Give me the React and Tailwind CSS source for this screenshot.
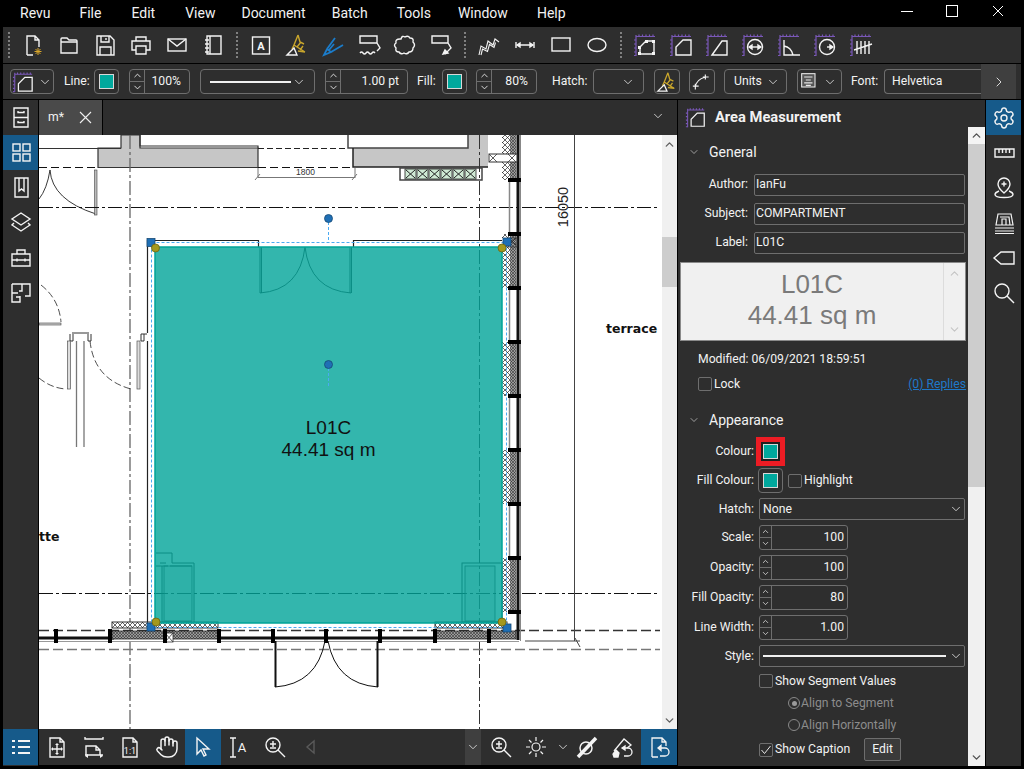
import React from "react";
import { ChevronDown, ChevronUp, ChevronRight, Settings, Hand } from "lucide-react";

const BORDER = "border border-[#6e6e6e]";

const menus = [
  ["Revu", ""],
  ["File", "ml-[29px]"],
  ["Edit", "ml-[30px]"],
  ["View", "ml-[30px]"],
  ["Document", "ml-[26px]"],
  ["Batch", "ml-[26px]"],
  ["Tools", "ml-[29px]"],
  ["Window", "ml-[27px]"],
  ["Help", "ml-[29px]"],
];

function Ic({ size = 24, color = "#f4f4f4", sw = 1.4, children, className = "" }) {
  return (
    <svg width={size} height={size} viewBox="0 0 24 24" fill="none" stroke={color} strokeWidth={sw} className={className}>
      {children}
    </svg>
  );
}

// purple ruler corner used by all the measurement tools
function Ruler() {
  return (
    <g stroke="#7a58b8" strokeWidth="1.2">
      <path d="M3 3.5h19M3 2v21" />
      <path d="M6 1.5v2M9.5 1.5v2M13 1.5v2M16.5 1.5v2M20 1.5v2M1 7h2M1 11h2M1 15h2M1 19h2M1 22.5h2" />
    </g>
  );
}

const AreaShape = <path d="M7 22v-8l7-7h8v15z" />;

function Highlighter({ size = 24 }) {
  return (
    <Ic size={size} color="#c9a62c">
      <path d="M13 2L9 12l11 7M13 2l2 7 4 2M9 12l-2 4M12 14l4-5M15 17l3-4M20 19l-7-1" />
      <path d="M2 22l7-7 3 7z" stroke="#f4f4f4" />
    </Ic>
  );
}

const toolbarOne = [
  [
    <Ic><path d="M6 22V3h8l4 4v7M14 3v4h4M6 22h6" /><path d="M17 15v7M13.5 18.5h7M14.5 16l5 5M19.5 16l-5 5" stroke="#d9a62a" strokeWidth="1" /></Ic>,
    <Ic><path d="M4 20V6q0-1 1-1h5l2 2h7q1 0 1 1v12zM4 9h16" /></Ic>,
    <Ic><path d="M4 3h13l4 4v15H4zM8 3v6h8V3M7 22v-8h11v8M13 5v2" /></Ic>,
    <Ic><path d="M7 8V4h10v4M7 17H3V8h18v9h-4M7 13h10v8H7z" /></Ic>,
    <Ic><rect x="3" y="6" width="18" height="12" /><path d="M3 6l9 7 9-7" /></Ic>,
    <Ic><path d="M6 3h14v18H6zM9 3v18M4 7h4M4 11h4M4 15h4M4 19h4" /></Ic>,
  ],
  [
    <Ic><rect x="3.500" y="4" width="17" height="17" /><text x="12" y="17" fontSize="11" fontWeight="700" textAnchor="middle" fill="#f4f4f4" stroke="none" fontFamily="Roboto">A</text></Ic>,
    <Highlighter />,
    <Ic color="#1b7cca" sw={1.8}><path d="M3 22l3-6 4 3zM6 16l8-11M10 19l12-7M8 17l5-6" /></Ic>,
    <Ic><path d="M3 3h17v7H3zM20 10l3 5-3 3" /><path d="M3 20q1.5-2 3 0t3 0 3 0 3 0 3 0" /></Ic>,
    <Ic><path d="M8 6q1-4 4-2 3-2 5 1 4 0 3 4 3 3 0 6 0 4-4 4-2 3-5 1-3 2-5-1-4 0-3-4-3-3 0-5-1-4 4-4z" /></Ic>,
    <Ic><path d="M3 3h16v7H3zM19 10l3 5-6 6" /><path d="M14 21l5-1-3-3z" fill="#f4f4f4" /></Ic>,
  ],
  [
    <Ic sw={1.1}><path d="M2 22l2-9 5 3 2-8 5 4 2-6 4 3M4 22l1.500-6 5 2.500 2-7 4.500 3 1.500-5" /></Ic>,
    <Ic><path d="M4 12h16M3 9v6M21 9v6" /><path d="M4 12l3-2v4zM20 12l-3-2v4z" fill="#f4f4f4" /></Ic>,
    <Ic><rect x="3" y="5" width="18" height="13" /></Ic>,
    <Ic><ellipse cx="12" cy="12" rx="9" ry="6.500" /></Ic>,
  ],
  [
    <Ic><Ruler /><path d="M7 21v-7l6-6h8v13z" /><g fill="#f4f4f4" stroke="none"><rect x="5" y="19" width="3" height="3" /><rect x="19" y="19" width="3" height="3" /><rect x="19" y="7" width="3" height="3" /><rect x="12" y="7" width="3" height="3" /><rect x="5" y="13" width="3" height="3" /></g></Ic>,
    <Ic><Ruler />{AreaShape}</Ic>,
    <Ic><Ruler /><path d="M7 22l10-14h5v14z" /></Ic>,
    <Ic><Ruler /><circle cx="14" cy="14" r="7.500" /><path d="M9 14h10" /><path d="M8 14l3-2v4zM20 14l-3-2v4z" fill="#f4f4f4" /></Ic>,
    <Ic><Ruler /><path d="M7 7v15h16M7 13q7 1 9 9" /></Ic>,
    <Ic><Ruler /><circle cx="14" cy="14" r="7.500" /><path d="M14 14h5" /><path d="M20 14l-3-2v4z" fill="#f4f4f4" /></Ic>,
    <Ic><Ruler /><path d="M8 8v13M12 8v13M16 8v13M20 8v13M5 17l18-6" /></Ic>,
  ],
];

const leftRail = [
  <Ic><path d="M5 3h14v19H5zM5 12.500h14M9 6v1.500h6V6M9 16v1.500h6V16" /></Ic>,
  <Ic><rect x="4" y="4" width="7" height="7" /><rect x="14" y="4" width="7" height="7" /><rect x="4" y="14" width="7" height="7" /><rect x="14" y="14" width="7" height="7" /></Ic>,
  <Ic><path d="M6 3h13v19H6zM10 3v13l2.500-2 2.500 2V3" /></Ic>,
  <Ic><path d="M12 3l9 6-9 6-9-6zM5 13l-2 2 9 6 9-6-2-2" /></Ic>,
  <Ic><path d="M3 9h18v12H3zM8 9V5h8v4M3 15h18M8 13.500v3M16 13.500v3" /></Ic>,
  <Ic><path d="M3 4h18v12h-5M13 4v7h-3M3 4v9M3 13h6M3 13v9h8v-6M7 17h4" /></Ic>,
];

const rightRail = [
  <Settings size={24} color="#f4f4f4" strokeWidth={1.4} />,
  <Ic><path d="M3 8h19v8H3zM7 8v4M10.500 8v4M14 8v4M17.500 8v4" /></Ic>,
  <Ic><path d="M12 2a6 6 0 0 1 6 6c0 4-6 9-6 9s-6-5-6-9a6 6 0 0 1 6-6zM12 5.500v5M9.500 8h5" /><path d="M7 15q-4 1.500-4 3.500 0 3 9 3t9-3q0-2-4-3.500" /></Ic>,
  <Ic sw={1.2}><path d="M6 3h13l2 11H4zM8 6h9l1 8M10 14V8h4v6M3 17h19M3 20h19M3 22.500h19" /></Ic>,
  <Ic><path d="M9 6h13v12H9l-7-6z" /></Ic>,
  <Ic><circle cx="10" cy="10" r="7" /><path d="M15 15l7 7" /></Ic>,
];

function Swatch() {
  return <div className="w-[15px] h-[15px] bg-[#00a89d] border border-[#d8d8d8]" />;
}

function Chevron({ className = "" }) {
  return <ChevronDown size={14} strokeWidth={1.4} color="#e8e8e8" className={className} />;
}

function Spinner({ width, value, h = "h-[25px]" }) {
  return (
    <div className={`${BORDER} rounded-[3px] flex ${h} shrink-0`} style={{ width }}>
      <div className="w-[12px] flex flex-col border-r border-[#6e6e6e]">
        <div className="flex-1 flex items-center justify-center border-b border-[#6e6e6e]"><ChevronUp size={9} color="#e8e8e8" /></div>
        <div className="flex-1 flex items-center justify-center"><ChevronDown size={9} color="#e8e8e8" /></div>
      </div>
      <div className="flex-1 flex items-center justify-end pr-[3px]">{value}</div>
    </div>
  );
}

function ToolSpinner({ width, value, ml }) {
  return (
    <div className={`${BORDER} rounded-[4px] flex h-[25px] shrink-0 ${ml}`} style={{ width }}>
      <div className="w-[15px] flex flex-col border-r border-[#6e6e6e]">
        <div className="flex-1 flex items-center justify-center border-b border-[#6e6e6e]"><ChevronUp size={11} color="#e8e8e8" /></div>
        <div className="flex-1 flex items-center justify-center"><ChevronDown size={11} color="#e8e8e8" /></div>
      </div>
      <div className="flex-1 flex items-center justify-end pr-[8px]">{value}</div>
    </div>
  );
}

function Check({ checked, className = "" }) {
  return (
    <div className={`w-[14px] h-[14px] ${BORDER} rounded-[2px] shrink-0 flex items-center justify-center ${className}`}>
      {checked && <svg width="12" height="12" viewBox="0 0 12 12" fill="none" stroke="#e8e8e8" strokeWidth="1"><path d="M1.500 6l3 3.500L10.500 2" /></svg>}
    </div>
  );
}

function Radio({ on }) {
  return (
    <div className="w-[12px] h-[12px] rounded-full border border-[#8a8a8a] flex items-center justify-center shrink-0">
      {on && <div className="w-[5px] h-[5px] rounded-full bg-[#9a9a9a]" />}
    </div>
  );
}

function GeneralRow({ label, value, className = "" }) {
  return (
    <div className={`flex items-center h-[22px] ${className}`}>
      <div className="w-[72px] text-right pr-[2px] pb-px">{label}</div>
      <div className={`ml-[4px] w-[211px] h-[22px] ${BORDER} rounded-[2px] flex items-center pl-[1px] pb-px`}>{value}</div>
    </div>
  );
}

function SpinRow({ label, value }) {
  return (
    <div className="flex items-center h-[25px] mt-[5px]">
      <div className="w-[76px] text-right">{label}</div>
      <div className="ml-[5px]"><Spinner width={89} value={value} /></div>
    </div>
  );
}

function Section({ title, className = "" }) {
  return (
    <div className={`flex items-center h-[20px] pl-[10px] ${className}`}>
      <ChevronDown size={12} strokeWidth={1.2} color="#e8e8e8" />
      <span className="ml-[9px] text-[14px]">{title}</span>
    </div>
  );
}

function Plan() {
  const mullionsY = [180, 234, 288, 342, 396, 450, 504, 558, 612];
  const hatchY = [[135, 180], [234, 288], [342, 396], [450, 504], [558, 612]];
  const mullionsX = [56, 110, 165, 219, 273, 326, 380, 435, 489];
  return (
    <svg viewBox="39 135 623 594" width="623" height="594" className="block bg-white" fontFamily="Liberation Sans">
      <defs>
        <pattern id="hatch" width="5" height="5" patternUnits="userSpaceOnUse">
          <rect width="5" height="5" fill="#fff" />
          <path d="M0 0l5 5M5 0L0 5" stroke="#222" strokeWidth="0.7" />
        </pattern>
        <pattern id="dark" width="3" height="3" patternUnits="userSpaceOnUse">
          <rect width="3" height="3" fill="#999" />
          <path d="M0 0l3 3M3 0L0 3" stroke="#222" strokeWidth="0.5" />
        </pattern>
      </defs>

      {/* grey core walls */}
      <path d="M121 135v13H98v19.500h160V148h-118v-13z" fill="#c6c6c6" stroke="#333" strokeWidth="1.200" />
      <path d="M140 135v11h118v2M39 148.500h82" fill="none" stroke="#333" strokeWidth="1.200" />
      <path d="M353 135v32h135v-32" fill="#c6c6c6" stroke="none" />
      <path d="M348 135v13h120v-13" fill="#fff" stroke="#444" strokeWidth="1.500" />
      <path d="M353 148v19h135" fill="none" stroke="#222" strokeWidth="1.500" />
      <rect x="400" y="168" width="82" height="12" fill="#fff" stroke="#444" strokeWidth="1.500" />
      {[406, 418, 430, 442, 454, 466].map((x) => (
        <g key={x}>
          <rect x={x - 1} y="169" width="11" height="10" fill="#cfe9d4" stroke="#222" strokeWidth="0.800" />
          <path d={`M${x} 170l9 8M${x + 9} 170l-9 8`} stroke="#222" strokeWidth="1" />
        </g>
      ))}
      <path d="M258 148.500h90" stroke="#222" strokeWidth="1" strokeDasharray="6 3" />
      <path d="M39 167.500h59M258 167.500h95" stroke="#111" strokeWidth="1" strokeDasharray="8 4" />
      <path d="M258 177.500h97M255 180l5-6M352 180l5-6M258 168v10M355 168v10" stroke="#777" strokeWidth="1" fill="none" />
      <text x="305.500" y="175" fontSize="8.500" textAnchor="middle" fill="#333">1800</text>

      {/* upper left door */}
      <path d="M39 199q8-10 11-29 2 30 46 44" fill="none" stroke="#222" strokeWidth="0.900" />
      <rect x="94.500" y="170" width="2.500" height="45" fill="#bbb" stroke="#444" strokeWidth="0.600" />

      {/* centre lines */}
      <path d="M39 207.500h621M39 593.500h621" stroke="#111" strokeWidth="1" strokeDasharray="14 3 3 3" />
      <path d="M130 135v594" stroke="#666" strokeWidth="1.300" strokeDasharray="14 3 3 3" />
      <path d="M479.500 135v594" stroke="#333" strokeWidth="1" strokeDasharray="14 3 3 3" />
      <path d="M39 630.500h621" stroke="#333" strokeWidth="1.300" strokeDasharray="10 4" />
      <path d="M39 649.500h621" stroke="#777" strokeWidth="1.300" strokeDasharray="10 4" />

      {/* left rooms */}
      <path d="M41 285q18 14 20 37M39 378q12 10 27 11M90 341q4 38 41 48" fill="none" stroke="#222" strokeWidth="0.800" strokeDasharray="7 3" />
      <rect x="39" y="323" width="22" height="2" fill="#ccc" stroke="#444" strokeWidth="0.600" />
      <path d="M72 333h17M70 334v7h3v-7M88 334v7h3v-7" fill="none" stroke="#333" strokeWidth="1" />
      <rect x="67.500" y="341" width="3" height="48" fill="#ddd" stroke="#555" strokeWidth="0.700" />
      <path d="M76.500 341v106M84 341v106" stroke="#777" strokeWidth="1.300" />
      <rect x="137" y="341" width="3" height="48" fill="#ddd" stroke="#555" strokeWidth="0.700" />
      <path d="M141 341v-7h6M141 341h3v-7" fill="none" stroke="#333" strokeWidth="1" />
      <text x="39" y="541" fontSize="12.500" fontWeight="700" fill="#111" fontFamily="DejaVu Sans">tte</text>
      <text x="606" y="333" fontSize="12.500" fontWeight="700" fill="#111" fontFamily="DejaVu Sans">terrace</text>

      {/* room shell */}
      <path d="M147.500 333V240.500h111v7M353.500 247v-6.500h150M147.500 341v282" fill="none" stroke="#222" strokeWidth="1.200" />

      {/* east wall */}
      {hatchY.map(([a, b]) => (
        <g key={a}>
          <rect x="502" y={a} width="8" height={b - a} fill="url(#hatch)" />
          <rect x="510" y={a} width="6" height={b - a} fill="url(#dark)" />
        </g>
      ))}
      <path d="M509.500 180v54M509.500 288v54M509.500 396v54M509.500 504v54" stroke="#888" strokeWidth="1.500" />
      <path d="M518 135v505" stroke="#111" strokeWidth="3" />
      <path d="M520.500 135v506" stroke="#888" strokeWidth="1" />
      {mullionsY.map((y) => <rect key={y} x="508" y={y - 2} width="13" height="4" fill="#000" />)}
      <rect x="489" y="154" width="28" height="8" fill="#fff" stroke="#333" strokeWidth="1" />
      <path d="M489 154l8 8M497 154l-8 8M508 154l8 8M516 154l-8 8" stroke="#333" strokeWidth="0.800" />
      <path d="M509 238l7 7M516 238l-7 7" stroke="#333" strokeWidth="1" />
      <rect x="508" y="238" width="9" height="9" fill="none" stroke="#333" strokeWidth="0.800" />

      {/* south wall */}
      <path d="M39 638h75M219 638h216" stroke="#111" strokeWidth="3" />
      <path d="M39 641.500h480" stroke="#999" strokeWidth="1" />
      <rect x="112" y="622" width="106" height="6" fill="url(#hatch)" stroke="#333" strokeWidth="1" />
      <rect x="112" y="631" width="106" height="8" fill="url(#dark)" stroke="#222" strokeWidth="0.800" />
      <rect x="435" y="622" width="72" height="6" fill="url(#hatch)" stroke="#333" strokeWidth="1" />
      <rect x="435" y="631" width="81" height="8" fill="url(#dark)" stroke="#222" strokeWidth="0.800" />
      <rect x="165" y="633" width="8" height="9" fill="#fff" stroke="#333" strokeWidth="0.800" />
      <path d="M165 633l8 9M173 633l-8 9" stroke="#333" strokeWidth="0.800" />
      {mullionsX.map((x) => <rect key={x} x={x - 2} y="629" width="4" height="14" fill="#000" />)}
      <path d="M275.500 641v46M377.500 641v46" stroke="#111" strokeWidth="2" />
      <path d="M275 687q42-3 50-46M378 687q-42-3-50-46" fill="none" stroke="#111" strokeWidth="1" />

      {/* dimension */}
      <path d="M574.500 135v506M525 641h55M575 638l5 9" fill="none" stroke="#444" strokeWidth="1" />
      <text transform="translate(568 207) rotate(-90)" fontSize="14.500" textAnchor="middle" fill="#222">16050</text>

      {/* room contents, tinted by the fill above them */}
      <path d="M260 247v46M261.500 247v46M350 247v46M351.500 247v46M260 293q40-3 45-46M351 293q-41-3-46-46" fill="none" stroke="#222" strokeWidth="0.900" />
      <path d="M156 553h16v10h22v59M156 566h12M160 563h6M162 566v56h30M170 566h22" fill="none" stroke="#333" strokeWidth="1" />
      <rect x="164" y="566" width="28" height="55" fill="#999" fillOpacity="0.250" stroke="#333" strokeWidth="0.800" />
      <rect x="462" y="563" width="40" height="59" fill="none" stroke="#333" strokeWidth="1" />
      <rect x="465" y="566" width="30" height="55" fill="#999" fillOpacity="0.250" stroke="#333" strokeWidth="0.800" />

      {/* area markup */}
      <rect x="155" y="247" width="347" height="376" fill="#00a498" fillOpacity="0.800" stroke="#00a498" strokeWidth="1.500" />
      <rect x="151.500" y="242.500" width="355" height="385" fill="none" stroke="#4aaaf2" strokeWidth="1" strokeDasharray="3 2" />
      <path d="M328.500 222v20M328.500 368v20" stroke="#4aaaf2" strokeWidth="1" strokeDasharray="3 2" />
      <g fill="#1f6fb5" stroke="#174a75" strokeWidth="0.800">
        <rect x="147" y="238.500" width="8" height="8" />
        <rect x="503" y="238" width="8" height="8" />
        <rect x="147" y="623" width="8" height="8" />
        <rect x="503" y="624" width="8" height="8" />
        <circle cx="328.500" cy="218.500" r="4" />
        <circle cx="328.500" cy="364.500" r="4" />
      </g>
      <g fill="#a4981d" stroke="#6d6612" strokeWidth="0.800">
        <circle cx="155.500" cy="248" r="4" />
        <circle cx="502" cy="248" r="4" />
        <circle cx="156" cy="622" r="4" />
        <circle cx="502" cy="622" r="4" />
      </g>
      <text x="328.500" y="434" fontSize="19" textAnchor="middle" fill="#111">L01C</text>
      <text x="328.500" y="456" fontSize="19" textAnchor="middle" fill="#111">44.41 sq m</text>
    </svg>
  );
}

export default function App() {
  const bottomLeft = [
    <Ic><path d="M5 22V3h10l4 4v15zM15 3v4h4M12 9v10M7 14h10" /><path d="M12 8l-2 2h4zM12 20l-2-2h4zM6 14l2-2v4zM18 14l-2-2v4z" fill="#f4f4f4" stroke="none" /></Ic>,
    <Ic><path d="M3 2v2h18V2M4 20v-9h10l4 4v5M14 11v4h4M3 20h18" /><path d="M3 21l3-2v4zM21 21l-3-2v4z" fill="#f4f4f4" stroke="none" /></Ic>,
    <Ic><path d="M5 22V3h10l4 4v15zM15 3v4h4" /><text x="12" y="19" fontSize="9" textAnchor="middle" fill="#f4f4f4" stroke="none" fontFamily="Roboto">1:1</text></Ic>,
    <Hand size={24} color="#f4f4f4" strokeWidth={1.5} />,
  ];
  return (
    <div className="w-[1024px] h-[769px] bg-black text-[#f2f2f2] text-[12.2px] [font-family:Roboto,sans-serif] overflow-hidden flex flex-col">
      {/* title bar */}
      <div className="h-[27px] flex items-center relative shrink-0">
        <div className="flex pl-[20px] text-[14px]">
          {menus.map(([name, ml]) => <span key={name} className={ml}>{name}</span>)}
        </div>
        <div className="ml-auto flex items-center pr-[20px] h-full pb-[5px]">
          <div className="w-[12px] h-px bg-white mr-[33px]" />
          <div className="w-[12px] h-[12px] border border-white mr-[34px]" />
          <svg width="12" height="12" viewBox="0 0 12 12" stroke="#fff" strokeWidth="1"><path d="M1 1l10 10M11 1L1 11" /></svg>
        </div>
      </div>

      {/* main toolbar */}
      <div className="h-[36px] mx-[3px] bg-[#2e2e2e] flex items-center shrink-0">
        {toolbarOne.map((group, g) => (
          <React.Fragment key={g}>
            <div className="w-[12px] flex justify-center shrink-0">
              <div className="h-[26px] border-l-2 border-dotted border-[#808080]" />
            </div>
            {group.map((icon, i) => (
              <div key={i} className="w-[36px] flex justify-center shrink-0">{icon}</div>
            ))}
          </React.Fragment>
        ))}
      </div>

      {/* properties toolbar */}
      <div className="h-[35px] mt-px mx-[3px] bg-[#2e2e2e] flex items-center shrink-0 pl-[7px]">
        <div className={`w-[44px] h-[25px] ${BORDER} rounded-[4px] flex items-center pl-[1px] shrink-0`}>
          <Ic size={22}><Ruler />{AreaShape}</Ic>
          <Chevron className="ml-[4px]" />
        </div>
        <span className="ml-[10px] w-[30px]">Line:</span>
        <div className={`w-[25px] h-[25px] ${BORDER} rounded-[4px] flex items-center justify-center shrink-0`}><Swatch /></div>
        <ToolSpinner width={61} value="100%" ml="ml-[10px]" />
        <div className={`ml-[10px] w-[115px] h-[25px] ${BORDER} rounded-[4px] flex items-center pl-[9px] pr-[8px] shrink-0`}>
          <div className="w-[81px] h-[2px] bg-[#f0f0f0]" />
          <Chevron className="ml-auto" />
        </div>
        <ToolSpinner width={83} value="1.00 pt" ml="ml-[10px]" />
        <span className="ml-[9px] w-[25px]">Fill:</span>
        <div className={`w-[25px] h-[25px] ${BORDER} rounded-[4px] flex items-center justify-center shrink-0`}><Swatch /></div>
        <ToolSpinner width={61} value="80%" ml="ml-[9px]" />
        <span className="ml-[15px] w-[41px]">Hatch:</span>
        <div className={`w-[51px] h-[25px] ${BORDER} rounded-[4px] flex items-center justify-end pr-[8px] shrink-0`}><Chevron /></div>
        <div className={`ml-[10px] w-[26px] h-[25px] ${BORDER} rounded-[4px] flex items-center justify-center shrink-0`}><Highlighter size={22} /></div>
        <div className={`ml-[9px] w-[26px] h-[25px] ${BORDER} rounded-[4px] flex items-center justify-center shrink-0`}>
          <Ic size={20}><path d="M4 18q1-9 12-12M1 17h7M4 14v7M13 6h7M16 3v6" /></Ic>
        </div>
        <div className={`ml-[9px] w-[63px] h-[25px] ${BORDER} rounded-[4px] flex items-center pl-[9px] pr-[6px] shrink-0`}>
          <span>Units</span><Chevron className="ml-auto" />
        </div>
        <div className={`ml-[10px] w-[45px] h-[25px] ${BORDER} rounded-[4px] flex items-center pl-[2px] pr-[4px] shrink-0`}>
          <Ic size={20} color="#e8e8e8" sw={1.3}><rect x="2" y="2" width="16" height="16" fill="#555" /><path d="M5 6h10M7 9.500h6M5 13h10M7 16h6" /></Ic>
          <Chevron className="ml-auto" />
        </div>
        <span className="ml-[9px] w-[33px]">Font:</span>
        <div className="w-[97px] h-[25px] border border-r-0 border-[#6e6e6e] rounded-l-[4px] flex items-center pl-[7px] shrink-0">Helvetica</div>
        <div className="w-[35px] h-[35px] bg-[#3f3f3f] flex items-center justify-center shrink-0"><ChevronRight size={16} strokeWidth={1.3} /></div>
      </div>

      {/* body */}
      <div className="h-[666px] mt-px mx-[3px] flex shrink-0">
        <div className="w-[35px] bg-[#2e2e2e] shrink-0 flex flex-col">
          {leftRail.map((icon, i) => (
            <div key={i} className={`h-[35px] flex items-center justify-center pb-px ${i === 1 ? "bg-[#165a8a]" : ""}`}>{icon}</div>
          ))}
          <div className="mt-auto h-[36px] mb-px bg-[#165a8a] flex items-center justify-center">
            <Ic sw={2}><path d="M9 6h12M9 12h12M9 18h12M3 6h3M3 12h3M3 18h3" /></Ic>
          </div>
        </div>

        <div className="w-[638px] ml-px shrink-0 flex flex-col">
          <div className="h-[35px] bg-[#2e2e2e] flex items-stretch shrink-0 pr-[12px]">
            <div className="w-[63px] bg-[#4a4a4a] flex items-center pl-[9px]">
              <span>m*</span>
              <svg width="13" height="13" viewBox="0 0 13 13" stroke="#f0f0f0" strokeWidth="1.100" className="ml-[15px]"><path d="M1 1l11 11M12 1L1 12" /></svg>
            </div>
            <div className="border-l border-black" />
            <div className="ml-auto flex items-center pb-[3px]"><Chevron /></div>
          </div>
          <div className="h-[594px] flex shrink-0">
            <Plan />
            <div className="w-[15px] bg-[#f0f0f0] flex flex-col items-center">
              <div className="h-[17px] flex items-center justify-center mt-[1px]"><ChevronUp size={13} strokeWidth={2.5} color="#606060" /></div>
              <div className="w-full h-[50px] bg-[#cdcdcd] mt-[84px]" />
              <div className="mt-auto h-[17px] flex items-center justify-center"><ChevronDown size={13} strokeWidth={2.5} color="#606060" /></div>
            </div>
          </div>
          <div className="h-[36px] bg-[#2e2e2e] flex items-center shrink-0">
            <div className="flex">
              {bottomLeft.map((icon, i) => (
                <div key={i} className="w-[36.5px] flex justify-center">{icon}</div>
              ))}
            </div>
            <div className="w-[36px] h-[36px] bg-[#165a8a] flex items-center justify-center shrink-0">
              <Ic><path d="M6 3v16l4-4 3 6 2-1-3-6h6z" /></Ic>
            </div>
            <div className="w-[36px] flex justify-center">
              <Ic><path d="M3 3h6M3 22h6M6 3v19" /><text x="15" y="17" fontSize="13" textAnchor="middle" fill="#f4f4f4" stroke="none" fontFamily="Roboto">A</text></Ic>
            </div>
            <div className="w-[36px] flex justify-center">
              <Ic><circle cx="10" cy="10" r="7" /><path d="M15 15l7 7M7 9h6M10 6v6M7 13h6" /></Ic>
            </div>
            <div className="w-[36px] flex justify-center">
              <Ic color="#5a5a5a"><path d="M15 6v12l-7-6z" /></Ic>
            </div>
            <div className="ml-[136px] w-[16px] h-[36px] bg-[#3f3f3f] flex items-center justify-center shrink-0"><Chevron /></div>
            <div className="ml-[8px] w-[24px] shrink-0">
              <Ic><circle cx="10" cy="10" r="7" /><path d="M15 15l7 7M7 9h6M10 6v6M7 13h6" /></Ic>
            </div>
            <div className="ml-[11px] w-[24px] shrink-0">
              <Ic sw={1.2}><circle cx="12" cy="12" r="4" /><path d="M12 2v4M12 18v4M2 12h4M18 12h4M5 5l2.500 2.500M19 5l-2.500 2.500M5 19l2.500-2.500M19 19l-2.500-2.500" /></Ic>
            </div>
            <Chevron className="ml-[8px] shrink-0" />
            <div className="ml-[5px] w-[24px] shrink-0">
              <Ic sw={1.5}><circle cx="11" cy="13" r="6" /><path d="M3 22L21 3" strokeWidth="3.500" /></Ic>
            </div>
            <div className="ml-[12px] w-[24px] shrink-0">
              <Ic sw={1.3}><path d="M3 16L13 4l7 6-4 3" /><path d="M3 22l-1-3 3-4 3 3-1 4z" fill="#f4f4f4" /><path d="M11 13h6a4 4 0 0 1 0 8h-4M11 13l3-2v4z" /></Ic>
            </div>
            <div className="ml-auto w-[36px] h-[36px] bg-[#165a8a] flex items-center justify-center shrink-0">
              <Ic sw={1.3}><path d="M5 22V3h10l4 4v4M15 3v4h4M5 22h6" /><path d="M11 13h7a4 4 0 0 1 0 8h-5M11 13l3-2.500v5z" /></Ic>
            </div>
          </div>
        </div>

        {/* properties panel */}
        <div className="w-[307px] ml-px bg-[#2e2e2e] shrink-0 flex flex-col">
          <div className="h-[27px] flex items-center pl-[7px] pt-[7px] shrink-0">
            <Ic size={21}><Ruler />{AreaShape}</Ic>
            <span className="ml-[9px] text-[14.7px] font-bold">Area Measurement</span>
          </div>
          <div className="flex flex-1 min-h-0">
            <div className="w-[290px] shrink-0 overflow-hidden">
              <Section title="General" className="mt-[15px]" />
              <GeneralRow label="Author:" value="IanFu" className="mt-[12px]" />
              <GeneralRow label="Subject:" value="COMPARTMENT" className="mt-[7px]" />
              <GeneralRow label="Label:" value="L01C" className="mt-[7px]" />
              <div className="mt-[8px] ml-[2px] w-[286px] h-[79px] bg-[#f0f0f0] border border-[#8a8a8a] flex">
                <div className="flex-1 flex flex-col items-center justify-center pb-[4px] text-[26px] leading-[31px] text-[#7a7a7a] [font-family:'Liberation_Sans',sans-serif]">
                  <div>L01C</div>
                  <div>44.41 sq m</div>
                </div>
                <div className="w-[22px] border-l border-[#dcdcdc] flex flex-col items-center justify-between py-[4px]">
                  <ChevronUp size={13} strokeWidth={2} color="#c4c4c4" />
                  <ChevronDown size={13} strokeWidth={2} color="#c4c4c4" />
                </div>
              </div>
              <div className="mt-[11px] pl-[20px] h-[14px] flex items-center">Modified: 06/09/2021 18:59:51</div>
              <div className="mt-[11px] pl-[20px] h-[14px] flex items-center pr-[2px]">
                <Check />
                <span className="ml-[2px]">Lock</span>
                <span className="ml-auto text-[#1e78c8] underline">(0) Replies</span>
              </div>
              <Section title="Appearance" className="mt-[19px]" />
              <div className="mt-[7px] flex items-center h-[29px]">
                <div className="w-[76px] text-right">Colour:</div>
                <div className="ml-[2px] w-[29px] h-[29px] border-[5px] border-[#ec1c24] bg-[#1f1f1f] flex items-center justify-center"><Swatch /></div>
              </div>
              <div className="mt-[2px] flex items-center h-[25px]">
                <div className="w-[76px] text-right">Fill Colour:</div>
                <div className={`ml-[4px] w-[25px] h-[25px] ${BORDER} rounded-[4px] flex items-center justify-center`}><Swatch /></div>
                <Check className="ml-[5px]" />
                <span className="ml-[2px]">Highlight</span>
              </div>
              <div className="mt-[5px] flex items-center h-[22px]">
                <div className="w-[76px] text-right">Hatch:</div>
                <div className={`ml-[5px] w-[206px] h-[22px] ${BORDER} rounded-[2px] flex items-center pl-[3px] pr-[1px]`}>
                  <span>None</span><Chevron className="ml-auto" />
                </div>
              </div>
              <SpinRow label="Scale:" value="100" />
              <SpinRow label="Opacity:" value="100" />
              <SpinRow label="Fill Opacity:" value="80" />
              <SpinRow label="Line Width:" value="1.00" />
              <div className="mt-[5px] flex items-center h-[22px]">
                <div className="w-[76px] text-right">Style:</div>
                <div className={`ml-[5px] w-[206px] h-[22px] ${BORDER} rounded-[2px] flex items-center pl-[3px] pr-[1px]`}>
                  <div className="w-[183px] h-[2px] bg-[#f0f0f0]" /><Chevron className="ml-auto" />
                </div>
              </div>
              <div className="mt-[7px] ml-[81px] flex items-center h-[14px]">
                <Check /><span className="ml-[2px]">Show Segment Values</span>
              </div>
              <div className="mt-[8px] ml-[110px] flex items-center h-[14px] text-[#8c8c8c]">
                <Radio on /><span className="ml-px">Align to Segment</span>
              </div>
              <div className="mt-[8px] ml-[110px] flex items-center h-[14px] text-[#8c8c8c]">
                <Radio /><span className="ml-px">Align Horizontally</span>
              </div>
              <div className="mt-[6px] ml-[81px] flex items-center h-[23px]">
                <Check checked /><span className="ml-[2px]">Show Caption</span>
                <div className={`ml-[14px] w-[37px] h-[23px] ${BORDER} rounded-[2px] bg-[#3a3a3a] flex items-center justify-center`}>Edit</div>
              </div>
            </div>
            <div className="w-[17px] bg-[#f0f0f0] flex flex-col shrink-0">
              <div className="h-[17px] bg-[#f4f4f4] flex items-center justify-center"><ChevronUp size={13} strokeWidth={2.5} color="#505050" /></div>
              <div className="h-[343px] bg-[#cdcdcd]" />
              <div className="mt-auto h-[17px] flex items-center justify-center"><ChevronDown size={13} strokeWidth={2.5} color="#505050" /></div>
            </div>
          </div>
        </div>

        <div className="w-[35px] ml-px bg-[#2e2e2e] shrink-0 flex flex-col">
          {rightRail.map((icon, i) => (
            <div key={i} className={`h-[35px] flex items-center justify-center ${i === 0 ? "bg-[#165a8a]" : ""}`}>{icon}</div>
          ))}
        </div>
      </div>
    </div>
  );
}
